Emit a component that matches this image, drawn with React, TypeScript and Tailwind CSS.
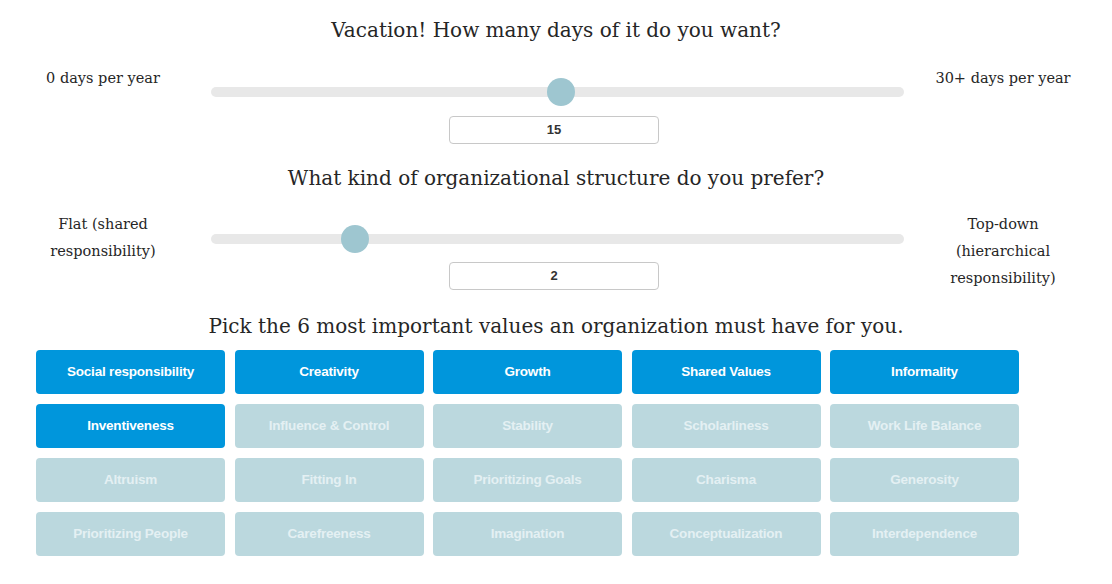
import React from "react";

const serif = { fontFamily: '"DejaVu Serif", serif' };

function Slider({ pct }: { pct: number }) {
  return (
    <div className="relative h-[28px] w-[693px] flex items-center">
      <div className="h-[10px] w-full rounded-full bg-[#e8e8e8]" />
      <div
        className="absolute top-0 h-[28px] w-[28px] -ml-[14px] rounded-full bg-[#9ec6d0]"
        style={{ left: `${pct}%` }}
      />
    </div>
  );
}

function ValueBox({ v, mt }: { v: string; mt: string }) {
  return (
    <div
      className={
        mt +
        " ml-[238px] h-[28px] w-[210px] rounded-[4px] border border-[#c8c8c8] flex items-center justify-center text-[13px] font-bold text-[#333]"
      }
      style={{ fontFamily: '"Liberation Sans", Arial, sans-serif' }}
    >
      {v}
    </div>
  );
}

const values: [string, boolean][] = [
  ["Social responsibility", true],
  ["Creativity", true],
  ["Growth", true],
  ["Shared Values", true],
  ["Informality", true],
  ["Inventiveness", true],
  ["Influence & Control", false],
  ["Stability", false],
  ["Scholarliness", false],
  ["Work Life Balance", false],
  ["Altruism", false],
  ["Fitting In", false],
  ["Prioritizing Goals", false],
  ["Charisma", false],
  ["Generosity", false],
  ["Prioritizing People", false],
  ["Carefreeness", false],
  ["Imagination", false],
  ["Conceptualization", false],
  ["Interdependence", false],
];

export default function App() {
  return (
    <div className="w-[1112px] h-[584px] bg-white text-[#262626] overflow-hidden" style={serif}>
      {/* Q1 */}
      <h2 className="pt-[17px] text-center text-[20px] leading-[26px]">
        Vacation! How many days of it do you want?
      </h2>
      <div className="mt-[20px] flex items-start">
        <div className="w-[206px] pt-[2px] text-center text-[14.5px] leading-[27px]">0 days per year</div>
        <div className="ml-[5px] pt-[15px] flex flex-col">
          <Slider pct={50.5} />
          <ValueBox v="15" mt="mt-[10px]" />
        </div>
        <div className="w-[198px] pt-[2px] text-center text-[14.5px] leading-[27px]">30+ days per year</div>
      </div>

      {/* Q2 */}
      <h2 className="mt-[21px] text-center text-[20px] leading-[26px]">
        What kind of organizational structure do you prefer?
      </h2>
      <div className="mt-[20px] flex items-start">
        <div className="w-[206px] text-center text-[14.5px] leading-[27px] px-[40px]">
          Flat (shared responsibility)
        </div>
        <div className="ml-[5px] pt-[14px] flex flex-col">
          <Slider pct={20.8} />
          <ValueBox v="2" mt="mt-[9px]" />
        </div>
        <div className="w-[198px] text-center text-[14.5px] leading-[27px] px-[40px]">
          Top-down (hierarchical responsibility)
        </div>
      </div>

      {/* Q3 */}
      <h2 className="mt-[21px] text-center text-[20px] leading-[26px]">
        Pick the 6 most important values an organization must have for you.
      </h2>
      <div
        className="mt-[11px] ml-[36px] grid grid-cols-[repeat(5,189px)] gap-x-[9.5px] gap-y-[10px]"
        style={{ fontFamily: '"Liberation Sans", Arial, sans-serif' }}
      >
        {values.map(([label, on]) => (
          <div
            key={label}
            className={
              "h-[44px] rounded-[4px] flex items-center justify-center text-[13.5px] font-bold tracking-[-0.2px] " +
              (on ? "bg-[#0096dc] text-white" : "bg-[#bbd8de] text-[#e4f0f3]")
            }
          >
            {label}
          </div>
        ))}
      </div>
    </div>
  );
}
